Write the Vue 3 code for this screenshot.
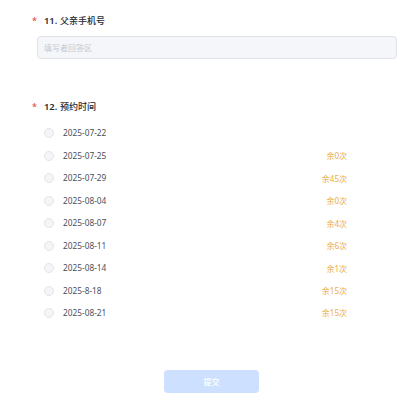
<script setup>
const slots = [
  { date: '2025-07-22' },
  { date: '2025-07-25', left: 0 },
  { date: '2025-07-29', left: 45 },
  { date: '2025-08-04', left: 0 },
  { date: '2025-08-07', left: 4 },
  { date: '2025-08-11', left: 6 },
  { date: '2025-08-14', left: 1 },
  { date: '2025-8-18', left: 15 },
  { date: '2025-08-21', left: 15 },
]
</script>

<template>
  <form class="form" @submit.prevent>
    <section class="question phone">
      <h2 class="title"><span class="required">*</span><span class="number">11.</span>父亲手机号</h2>
      <div class="field">填写者回答区</div>
    </section>
    <section class="question">
      <h2 class="title"><span class="required">*</span><span class="number">12.</span>预约时间</h2>
      <ul class="options">
        <li v-for="slot in slots" :key="slot.date" class="option">
          <span class="radio"></span>
          <span class="date">{{ slot.date }}</span>
          <span v-if="slot.left !== undefined" class="left">余{{ slot.left }}次</span>
        </li>
      </ul>
    </section>
    <button class="submit" type="button">提交</button>
  </form>
</template>

<style>
body {
  margin: 0;
  background: #fff;
}
</style>

<style scoped>
.form {
  box-sizing: border-box;
  display: flex;
  flex-direction: column;
  height: 411px;
  padding-top: 14px;
  font-family: "Noto Sans", "Noto Sans CJK SC", sans-serif;
  color: #4b4f5a;
}
.phone {
  height: 86px;
}
.title {
  display: flex;
  align-items: center;
  height: 14px;
  margin: 0;
  padding-left: 32px;
  font-size: 9px;
  line-height: 14px;
  font-weight: 500;
  color: #252933;
}
.required {
  width: 12px;
  font-size: 9px;
  font-weight: 600;
  color: #e8575a;
}
.number {
  width: 16px;
  font-size: 9.3px;
  font-weight: 600;
}
.field {
  box-sizing: border-box;
  height: 23px;
  margin: 8px 23px 0 37px;
  padding-left: 6px;
  border: 1px solid #dfe2e6;
  border-radius: 4px;
  background: #f4f6fa;
  color: #c5c9cf;
  font-size: 8px;
  line-height: 22px;
}
.options {
  margin: 0;
  padding: 8px 73px 0 44px;
  list-style: none;
}
.option {
  display: flex;
  align-items: center;
  height: 22.47px;
}
.radio {
  box-sizing: border-box;
  width: 10px;
  height: 10px;
  margin-right: 9px;
  border: 1px solid #e2e4e7;
  border-radius: 50%;
  background: #f4f5f7;
}
.date {
  font-size: 8.3px;
  line-height: 12px;
}
.left {
  margin-left: auto;
  padding-top: 1px;
  font-size: 8px;
  line-height: 12px;
  color: #ebab3c;
}
.submit {
  width: 95px;
  height: 23px;
  margin: 46px 0 0 164px;
  padding: 0;
  border: 0;
  border-radius: 4px;
  background: #cde0ff;
  color: #fff;
  font: 500 8px/23px "Noto Sans", "Noto Sans CJK SC", sans-serif;
}
</style>
